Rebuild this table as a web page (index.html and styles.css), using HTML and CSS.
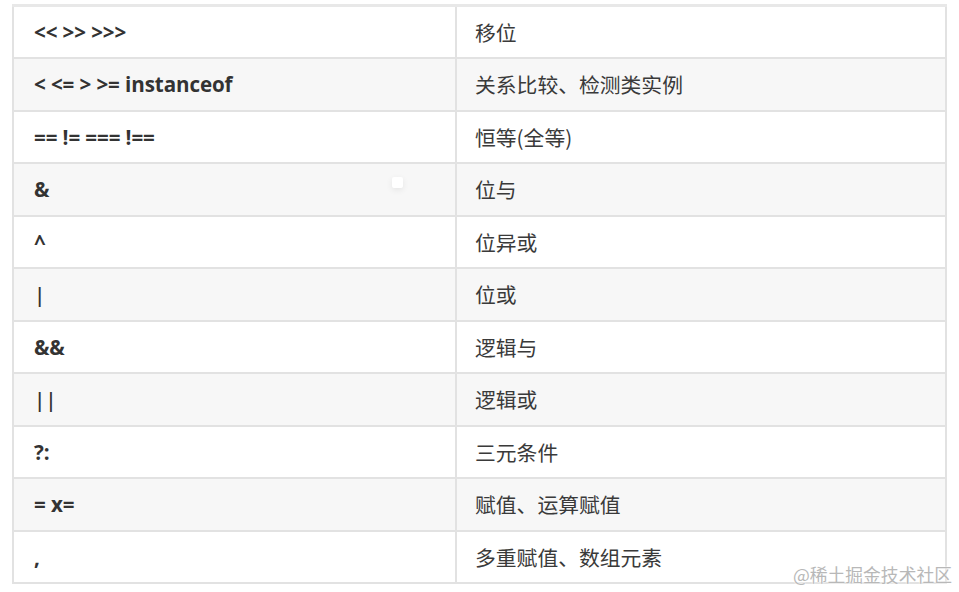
FILE: index.html
```html
<!DOCTYPE html>
<html lang="zh-CN">
<head>
<meta charset="utf-8">
<title>运算符优先级</title>
<link rel="stylesheet" href="styles.css">
</head>
<body>
<div class="page">
  <table class="ops">
    <tbody>
      <tr><td class="op">&lt;&lt; &gt;&gt; &gt;&gt;&gt;</td><td class="desc">移位</td></tr>
      <tr><td class="op">&lt; &lt;= &gt; &gt;= instanceof</td><td class="desc">关系比较、检测类实例</td></tr>
      <tr><td class="op">== != === !==</td><td class="desc">恒等(全等)</td></tr>
      <tr><td class="op">&amp;</td><td class="desc">位与</td></tr>
      <tr><td class="op">^</td><td class="desc">位异或</td></tr>
      <tr><td class="op thin">|</td><td class="desc">位或</td></tr>
      <tr><td class="op">&amp;&amp;</td><td class="desc">逻辑与</td></tr>
      <tr><td class="op thin">||</td><td class="desc">逻辑或</td></tr>
      <tr><td class="op">?:</td><td class="desc">三元条件</td></tr>
      <tr><td class="op">= x=</td><td class="desc">赋值、运算赋值</td></tr>
      <tr><td class="op">,</td><td class="desc">多重赋值、数组元素</td></tr>
    </tbody>
  </table>
  <span class="dot"></span>
  <span class="watermark">@稀土掘金技术社区</span>
</div>
</body>
</html>
```

FILE: styles.css
```css
html, body {
  margin: 0;
  padding: 0;
  background: #ffffff;
}

.page {
  position: relative;
  width: 959px;
  height: 592px;
  overflow: hidden;
  padding: 4px 0 0 12px;
  box-sizing: border-box;
}

.ops {
  border-collapse: collapse;
  width: 935px;
  border-top: 3px solid #e8e8e8;
  table-layout: fixed;
}

.ops tr {
  height: 52.5px;
  background: #ffffff;
}

.ops tr:nth-child(even) {
  background: #f7f7f7;
}

.ops td {
  border: 2px solid #e2e2e2;
  padding: 0 20px;
  vertical-align: middle;
  color: #333333;
  white-space: nowrap;
}

.ops td.op {
  width: 401px;
  font-family: "Open Sans", "Noto Sans CJK SC", sans-serif;
  font-weight: 700;
  font-size: 20.6px;
  letter-spacing: -0.1px;
  padding-left: 20px;
}

.ops td.op.thin {
  font-weight: 600;
}

.ops td.desc {
  font-family: "Noto Sans CJK SC", sans-serif;
  font-size: 20.8px;
  color: #3a3a3a;
  padding-left: 18px;
}

.dot {
  position: absolute;
  left: 392px;
  top: 177px;
  width: 11px;
  height: 11px;
  background: #ffffff;
  border-radius: 2px;
  box-shadow: 0 2px 6px rgba(0, 0, 0, 0.08);
}

.watermark {
  position: absolute;
  right: 7px;
  bottom: 5px;
  font-family: "Noto Sans CJK SC", sans-serif;
  font-size: 17.8px;
  color: #b8b8b8;
  text-shadow: 0 0 2px #ffffff, 0 0 2px #ffffff;
}
```
